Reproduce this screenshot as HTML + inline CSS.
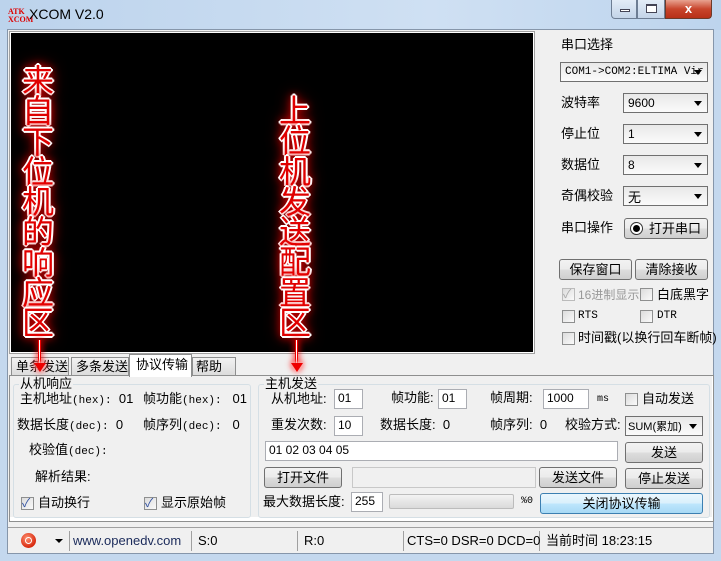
<!DOCTYPE html>
<html><head><meta charset="utf-8"><style>
*{margin:0;padding:0;box-sizing:border-box}
body{width:721px;height:561px;overflow:hidden;background:#c4d8ee;font-family:"Liberation Sans","Noto Sans CJK SC",sans-serif;font-size:12px;color:#000;position:relative}
.a{position:absolute;white-space:nowrap}
.t{position:absolute;white-space:nowrap;line-height:14px;transform:translateY(-7px)}
.btn{position:absolute;border:1px solid #707070;border-radius:3px;background:linear-gradient(#f2f2f2,#ebebeb 50%,#dddddd 51%,#cfcfcf);text-align:center;font-size:13px}
.cb{position:absolute;border:1px solid #707070;background:linear-gradient(#e8e8e8,#fafafa);display:flex;align-items:center;justify-content:flex-start;padding-left:4px}
.inp{position:absolute;background:#fff;border:1px solid #abadb3;padding-left:3px;font-size:12px;line-height:17px}
.chk{position:absolute;width:13px;height:13px;border:1px solid #8e8f8f;background:linear-gradient(135deg,#dcdcdc,#fafafa)}
.arr{position:absolute;right:5px;top:50%;margin-top:-2px;border-left:4px solid transparent;border-right:4px solid transparent;border-top:5px solid #000}
.glow{position:absolute;width:40px;font-size:32px;line-height:30.3px;text-align:center;color:#e00000;font-weight:normal;font-family:"Noto Sans CJK SC",sans-serif;text-shadow:1px 0 #fff,-1px 0 #fff,0 1px #fff,0 -1px #fff,2px 0 #fff,-2px 0 #fff,0 2px #fff,0 -2px #fff,1px 1px #fff,-1px -1px #fff,1px -1px #fff,-1px 1px #fff,0 0 8px #f00,0 0 12px #f00,0 0 16px #c00}
.sep{position:absolute;top:531px;width:1px;height:20px;background:#a0a0a0}
.ln{position:absolute;width:3px;background:#fff;border-left:1px solid #e00;border-right:1px solid #e00;box-shadow:0 0 6px 2px rgba(255,0,0,.6)}
.hd{position:absolute;width:0;height:0;border-left:6px solid transparent;border-right:6px solid transparent;border-top:9px solid #e00;filter:drop-shadow(0 0 2px #fff) drop-shadow(0 0 3px #f00)}
</style></head><body>
<div class="a" style="left:0;top:0;width:721px;height:30px;background:linear-gradient(90deg,#bcd3ec,#cfe0f3 60%,#bdd4ed)"></div>
<div class="a" style="left:8px;top:8px;color:#d00;font-size:8px;font-weight:bold;line-height:8px;font-family:'Liberation Serif',serif">ATK<br>XCOM</div>
<div class="a" style="left:29px;top:6px;font-size:14px;color:#000">XCOM V2.0</div>
<div class="a" style="left:611px;top:0;width:26px;height:19px;border:1px solid #6d7d93;border-top:none;border-radius:0 0 0 4px;background:linear-gradient(#e3ecf7,#c3d4e8)"><div class="a" style="left:8px;top:9px;width:10px;height:3px;background:#fff;border:1px solid #445"></div></div>
<div class="a" style="left:637px;top:0;width:28px;height:19px;border:1px solid #6d7d93;border-top:none;background:linear-gradient(#e3ecf7,#c3d4e8)"><div class="a" style="left:8px;top:4px;width:11px;height:9px;border:1px solid #445;border-top-width:2px;background:#fff"></div></div>
<div class="a" style="left:665px;top:0;width:47px;height:19px;border:1px solid #6d3a2a;border-top:none;border-radius:0 0 4px 0;background:linear-gradient(#e8a290,#c8452c 50%,#b83018);color:#fff;font-weight:bold;text-align:center;font-size:13px;line-height:17px">x</div>
<div class="a" style="left:7px;top:29px;width:707px;height:525px;background:#f0f0f0;border:1px solid #8696aa"></div>
<div class="a" style="left:9px;top:31px;width:526px;height:323px;background:#fff;border:1px solid #a0a0a0"></div>
<div class="a" style="left:11px;top:33px;width:522px;height:319px;background:#000"></div>
<div class="glow" style="left:18px;top:64px">来<br>自<br>下<br>位<br>机<br>的<br>响<br>应<br>区</div>
<div class="glow" style="left:275px;top:94px">上<br>位<br>机<br>发<br>送<br>配<br>置<br>区</div>
<!-- right panel -->
<div class="t" style="left:561px;top:45px;font-size:13px">串口选择</div>
<div class="cb" style="left:560px;top:62px;width:148px;height:20px;font-family:'Liberation Mono',monospace;font-size:11px">COM1-&gt;COM2:ELTIMA Vir<div class="arr"></div></div>
<div class="t" style="left:561px;top:103px;font-size:13px">波特率</div>
<div class="cb" style="left:623px;top:93px;width:85px;height:20px">9600<div class="arr"></div></div>
<div class="t" style="left:561px;top:134px;font-size:13px">停止位</div>
<div class="cb" style="left:623px;top:124px;width:85px;height:20px">1<div class="arr"></div></div>
<div class="t" style="left:561px;top:165px;font-size:13px">数据位</div>
<div class="cb" style="left:623px;top:155px;width:85px;height:20px">8<div class="arr"></div></div>
<div class="t" style="left:561px;top:196px;font-size:13px">奇偶校验</div>
<div class="cb" style="left:623px;top:186px;width:85px;height:20px;font-size:13px">无<div class="arr"></div></div>
<div class="t" style="left:561px;top:228px;font-size:13px">串口操作</div>
<div class="btn" style="left:624px;top:218px;width:84px;height:21px;line-height:19px;padding-left:18px">打开串口</div>
<div class="a" style="left:630px;top:222px;width:13px;height:13px;border-radius:50%;border:1px solid #333;background:#fff"><div class="a" style="left:2px;top:2px;width:7px;height:7px;border-radius:50%;background:#000"></div></div>
<div class="btn" style="left:559px;top:259px;width:73px;height:21px;line-height:19px">保存窗口</div>
<div class="btn" style="left:635px;top:259px;width:73px;height:21px;line-height:19px">清除接收</div>
<div class="chk" style="left:562px;top:288px;border-color:#bbb"></div><div class="a" style="left:563px;top:285px;color:#aaa;font-size:12px">✓</div>
<div class="t" style="left:578px;top:295px;color:#999">16进制显示</div>
<div class="chk" style="left:640px;top:288px"></div><div class="t" style="left:657px;top:295px;font-size:13px">白底黑字</div>
<div class="chk" style="left:562px;top:310px"></div><div class="t" style="left:578px;top:316px;font-family:'Liberation Mono',monospace;font-size:11px">RTS</div>
<div class="chk" style="left:640px;top:310px"></div><div class="t" style="left:657px;top:316px;font-family:'Liberation Mono',monospace;font-size:11px">DTR</div>
<div class="chk" style="left:562px;top:332px"></div><div class="t" style="left:578px;top:338px;font-size:13px">时间戳(以换行回车断帧)</div>
<!-- tabs -->
<div class="a" style="left:9px;top:375px;width:705px;height:147px;background:#fff;border:1px solid #8e8f8f"></div>
<div class="a" style="left:10px;top:376px;width:702px;height:141px;background:#f0f0f0"></div>
<div class="a" style="left:11px;top:357px;width:58px;height:19px;border:1px solid #8e8f8f;background:linear-gradient(#f2f2f2,#dcdcdc);font-size:13px;padding-left:4px;line-height:17px">单条发送</div>
<div class="a" style="left:71px;top:357px;width:58px;height:19px;border:1px solid #8e8f8f;background:linear-gradient(#f2f2f2,#dcdcdc);font-size:13px;padding-left:4px;line-height:17px">多条发送</div>
<div class="a" style="left:129px;top:354px;width:63px;height:23px;border:1px solid #8e8f8f;border-bottom:none;background:#fff;font-size:13px;padding-left:6px;line-height:20px">协议传输</div>
<div class="a" style="left:192px;top:357px;width:44px;height:19px;border:1px solid #8e8f8f;background:linear-gradient(#f2f2f2,#dcdcdc);font-size:13px;padding-left:3px;line-height:17px">帮助</div>
<!-- arrows -->
<div class="ln" style="left:38px;top:340px;height:25px"></div>
<div class="hd" style="left:34px;top:363px"></div>
<div class="ln" style="left:295px;top:340px;height:25px"></div>
<div class="hd" style="left:291px;top:363px"></div>
<!-- group 1 -->
<div class="a" style="left:13px;top:384px;width:238px;height:134px;border:1px solid #d5dfe5;border-radius:3px"></div>
<div class="t" style="left:19px;top:384px;background:#f0f0f0;padding:0 1px;font-size:13px">从机响应</div>
<div class="t" style="left:20px;top:399px;font-size:13px">主机地址<span style="font-family:'Liberation Mono';font-size:11px">(hex):</span>&nbsp;&nbsp;01</div>
<div class="t" style="left:143px;top:399px;font-size:13px">帧功能<span style="font-family:'Liberation Mono';font-size:11px">(hex):</span>&nbsp;&nbsp;&nbsp;01</div>
<div class="t" style="left:17px;top:425px;font-size:13px">数据长度<span style="font-family:'Liberation Mono';font-size:11px">(dec):</span>&nbsp;&nbsp;0</div>
<div class="t" style="left:143px;top:425px;font-size:13px">帧序列<span style="font-family:'Liberation Mono';font-size:11px">(dec):</span>&nbsp;&nbsp;&nbsp;0</div>
<div class="t" style="left:29px;top:450px;font-size:13px">校验值<span style="font-family:'Liberation Mono';font-size:11px">(dec):</span></div>
<div class="t" style="left:35px;top:477px;font-size:13px">解析结果:</div>
<div class="chk" style="left:21px;top:497px"></div><div class="a" style="left:22px;top:494px;color:#3050a0">✓</div><div class="t" style="left:38px;top:503px;font-size:13px">自动换行</div>
<div class="chk" style="left:144px;top:497px"></div><div class="a" style="left:145px;top:494px;color:#3050a0">✓</div><div class="t" style="left:161px;top:503px;font-size:13px">显示原始帧</div>
<!-- group 2 -->
<div class="a" style="left:258px;top:384px;width:452px;height:134px;border:1px solid #d5dfe5;border-radius:3px"></div>
<div class="t" style="left:264px;top:384px;background:#f0f0f0;padding:0 1px;font-size:13px">主机发送</div>
<div class="t" style="left:271px;top:399px;font-size:13px">从机地址:</div>
<div class="inp" style="left:334px;top:389px;width:29px;height:20px">01</div>
<div class="t" style="left:391px;top:398px;font-size:13px">帧功能:</div>
<div class="inp" style="left:438px;top:389px;width:29px;height:20px">01</div>
<div class="t" style="left:490px;top:398px;font-size:13px">帧周期:</div>
<div class="inp" style="left:543px;top:389px;width:46px;height:20px">1000</div>
<div class="t" style="left:597px;top:400px;font-family:'Liberation Mono';font-size:10px">ms</div>
<div class="chk" style="left:625px;top:393px"></div><div class="t" style="left:642px;top:399px;font-size:13px">自动发送</div>
<div class="t" style="left:271px;top:425px;font-size:13px">重发次数:</div>
<div class="inp" style="left:334px;top:416px;width:29px;height:20px">10</div>
<div class="t" style="left:380px;top:425px;font-size:13px">数据长度:&nbsp;&nbsp;0</div>
<div class="t" style="left:490px;top:425px;font-size:13px">帧序列:&nbsp;&nbsp;0</div>
<div class="t" style="left:565px;top:425px;font-size:13px">校验方式:</div>
<div class="cb" style="left:625px;top:416px;width:78px;height:20px;padding-left:2px;font-size:11px">SUM(累加)<div class="arr"></div></div>
<div class="inp" style="left:265px;top:441px;width:353px;height:20px">01 02 03 04 05</div>
<div class="btn" style="left:625px;top:442px;width:78px;height:21px;line-height:19px">发送</div>
<div class="btn" style="left:264px;top:467px;width:78px;height:21px;line-height:19px">打开文件</div>
<div class="a" style="left:352px;top:467px;width:184px;height:21px;border:1px solid #c8c8c8;background:#f0f0f0"></div>
<div class="btn" style="left:539px;top:467px;width:78px;height:21px;line-height:19px">发送文件</div>
<div class="btn" style="left:625px;top:468px;width:78px;height:21px;line-height:19px">停止发送</div>
<div class="t" style="left:263px;top:502px;font-size:13px">最大数据长度:</div>
<div class="inp" style="left:351px;top:492px;width:32px;height:20px">255</div>
<div class="a" style="left:389px;top:494px;width:125px;height:15px;border:1px solid #bcbcbc;border-radius:2px;background:linear-gradient(#f3f3f3,#dadada)"></div>
<div class="t" style="left:521px;top:502px;font-size:10px;font-family:'Liberation Mono'">%0</div>
<div class="btn" style="left:540px;top:493px;width:163px;height:21px;line-height:19px;border-color:#3c7fb1;background:linear-gradient(#eaf6fd,#d9f0fc 50%,#bee6fd 51%,#a7d9f5)">关闭协议传输</div>
<!-- status -->
<div class="a" style="left:8px;top:527px;width:705px;height:1px;background:#a0a0a0"></div>
<div class="a" style="left:21px;top:533px;width:15px;height:15px;border-radius:50%;background:radial-gradient(circle at 40% 35%,#ff9070,#d82a10 70%);"><div class="a" style="left:4px;top:4px;width:7px;height:7px;border-radius:50%;border:1.5px solid #fff"></div></div>
<div class="a" style="left:55px;top:539px;border-left:4px solid transparent;border-right:4px solid transparent;border-top:4px solid #000"></div>
<div class="sep" style="left:69px"></div><div class="sep" style="left:191px"></div><div class="sep" style="left:297px"></div><div class="sep" style="left:403px"></div><div class="sep" style="left:539px"></div>
<div class="t" style="left:73px;top:541px;font-size:13px;color:#1a2a5a">www.openedv.com</div>
<div class="t" style="left:198px;top:541px;font-size:13px">S:0</div>
<div class="t" style="left:304px;top:541px;font-size:13px">R:0</div>
<div class="t" style="left:407px;top:541px;font-size:13px">CTS=0 DSR=0 DCD=0</div>
<div class="t" style="left:546px;top:541px;font-size:13px">当前时间 18:23:15</div>
</body></html>
